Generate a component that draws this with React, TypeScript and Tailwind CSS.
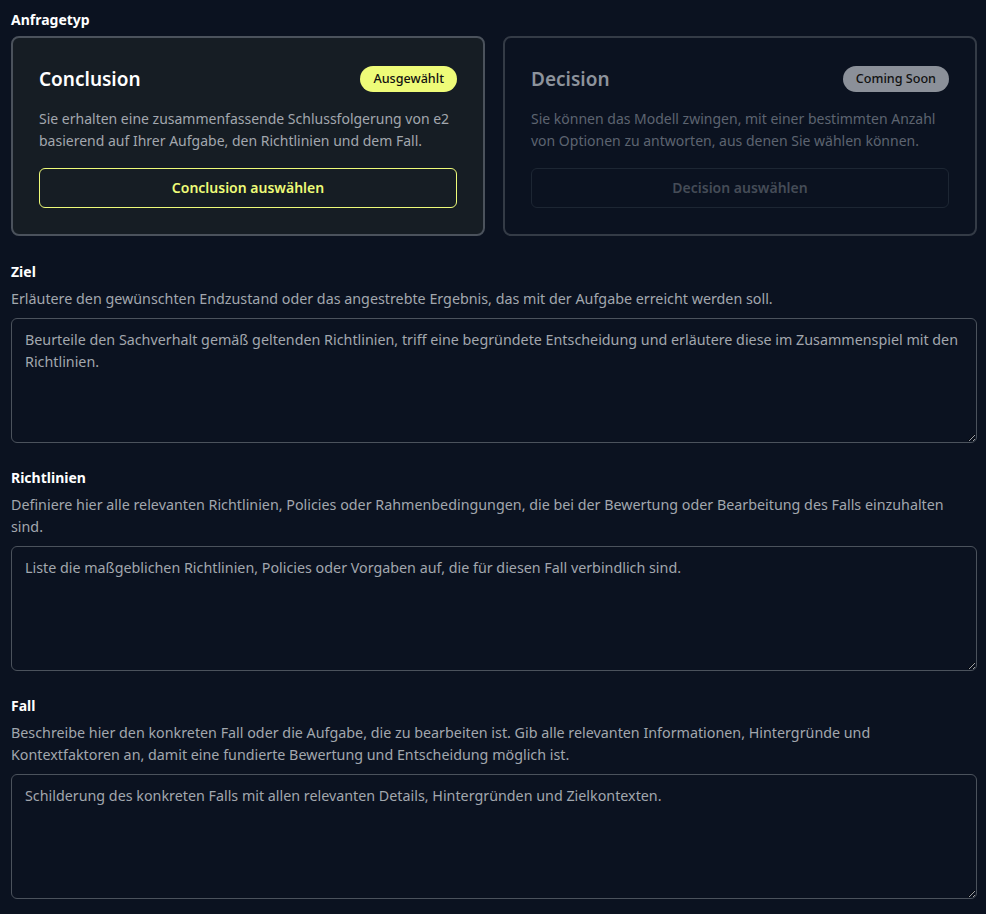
import { useState } from "react";

type Mode = "conclusion" | "decision";

export default function App() {
  const [mode, setMode] = useState<Mode>("conclusion");

  return (
    <div
      className="min-h-screen bg-[#0b1220] pl-[11px] pr-[9px] pt-[10px] pb-4 text-white"
      style={{ fontFamily: '"Noto Sans", "Open Sans", sans-serif' }}
    >
      {/* ANFRAGETYP */}
      <p className="text-sm font-bold leading-5">Anfragetyp</p>

      <div className="mt-[6px] grid grid-cols-2 gap-[18px]">
        <TypeCard
          title="Conclusion"
          badge="Ausgewählt"
          text="Sie erhalten eine zusammenfassende Schlussfolgerung von e2 basierend auf Ihrer Aufgabe, den Richtlinien und dem Fall."
          action="Conclusion auswählen"
          selected={mode === "conclusion"}
          onSelect={() => setMode("conclusion")}
        />
        <TypeCard
          title="Decision"
          badge="Coming Soon"
          text="Sie können das Modell zwingen, mit einer bestimmten Anzahl von Optionen zu antworten, aus denen Sie wählen können."
          action="Decision auswählen"
          disabled
        />
      </div>

      <div className="mt-[26px]">
        <Section
          label="Ziel"
          hint="Erläutere den gewünschten Endzustand oder das angestrebte Ergebnis, das mit der Aufgabe erreicht werden soll."
          placeholder="Beurteile den Sachverhalt gemäß geltenden Richtlinien, triff eine begründete Entscheidung und erläutere diese im Zusammenspiel mit den Richtlinien."
        />
      </div>
      <div className="mt-[25px]">
        <Section
          label="Richtlinien"
          hint="Definiere hier alle relevanten Richtlinien, Policies oder Rahmenbedingungen, die bei der Bewertung oder Bearbeitung des Falls einzuhalten sind."
          placeholder="Liste die maßgeblichen Richtlinien, Policies oder Vorgaben auf, die für diesen Fall verbindlich sind."
        />
      </div>
      <div className="mt-[25px]">
        <Section
          label="Fall"
          hint="Beschreibe hier den konkreten Fall oder die Aufgabe, die zu bearbeiten ist. Gib alle relevanten Informationen, Hintergründe und Kontextfaktoren an, damit eine fundierte Bewertung und Entscheidung möglich ist."
          placeholder="Schilderung des konkreten Falls mit allen relevanten Details, Hintergründen und Zielkontexten."
        />
      </div>
    </div>
  );
}

function TypeCard({
  title,
  badge,
  text,
  action,
  selected,
  disabled,
  onSelect,
}: {
  title: string;
  badge: string;
  text: string;
  action: string;
  selected?: boolean;
  disabled?: boolean;
  onSelect?: () => void;
}) {
  return (
    <div
      className={
        selected
          ? "rounded-lg border-2 border-[#4b525c] bg-[#161d24] px-[26px] pt-[26px] pb-[26px]"
          : "rounded-lg border-2 border-[#343b46] bg-[#0b1220] px-[26px] pt-[26px] pb-[26px]"
      }
    >
      {/* HEADER */}
      <div className="flex h-[30px] items-center justify-between">
        <h3
          className={
            selected
              ? "text-[19px] font-semibold text-white"
              : "text-[19px] font-semibold text-[#8d939c]"
          }
        >
          {title}
        </h3>
        <span
          className={
            selected
              ? "rounded-full bg-[#eefb78] px-[13px] py-[4px] text-[12.6px] leading-[18px] font-medium text-[#111]"
              : "rounded-full bg-[#8b9099] px-[13px] py-[4px] text-[12.6px] leading-[18px] font-medium text-[#111]"
          }
        >
          {badge}
        </span>
      </div>

      <p
        className={
          selected
            ? "mt-[14px] text-[14px] leading-[22px] text-[#a2a7ae]"
            : "mt-[14px] text-[14px] leading-[22px] text-[#5d6470]"
        }
      >
        {text}
      </p>

      <button
        type="button"
        disabled={disabled}
        onClick={onSelect}
        className={
          selected
            ? "mt-[16px] h-10 w-full rounded-md border border-[#eefb78] text-sm font-semibold text-[#eefb78]"
            : "mt-[16px] h-10 w-full rounded-md border border-[#1d2633] text-sm font-semibold text-[#454c57]"
        }
      >
        {action}
      </button>
    </div>
  );
}

function Section({
  label,
  hint,
  placeholder,
}: {
  label: string;
  hint: string;
  placeholder: string;
}) {
  return (
    <div>
      <p className="text-sm font-bold leading-5">{label}</p>
      <p className="mt-[6px] text-[14.3px] leading-[22.5px] text-[#a2a7ae]">{hint}</p>
      <textarea
        placeholder={placeholder}
        className="mt-[7px] block h-[125px] w-full rounded-md border border-[#4b525c] bg-transparent px-[13px] py-[10px] text-[14.3px] leading-[22px] text-[#c9cdd3] placeholder:text-[#a2a7ae] outline-none"
      />
    </div>
  );
}
